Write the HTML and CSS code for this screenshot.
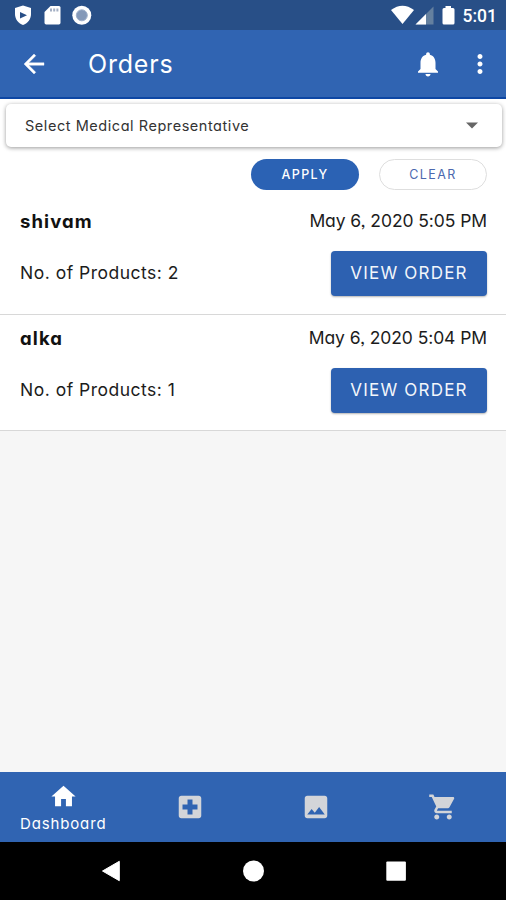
FILE: index.html
```html
<!DOCTYPE html>
<html lang="en">
<head>
<meta charset="utf-8">
<title>Orders</title>
<link rel="stylesheet" href="styles.css">
</head>
<body>
<div class="screen">
  <div class="status">
    <svg class="status-left" width="84" height="30" viewBox="0 0 84 30">
      <path fill="#fff" d="M9 5.500 L17 8 V14 C17 19 14 23 9 25 C4 23 1 19 1 14 V8Z"/>
      <path fill="#284f87" d="M6 12 L13 15.200 L6 18.400Z"/>
      <path fill="#fff" d="M36.500 6 H45 Q46.500 6 46.500 7.500 V22.800 Q46.500 24.500 44.800 24.500 H32.200 Q30.500 24.500 30.500 22.800 V12Z"/>
      <path fill="#a3afc4" d="M36 8.500h2v3h-2zM39.200 8.500h2v3h-2zM42.400 8.500h2v3h-2z"/>
      <circle cx="67.800" cy="15.300" r="9.500" fill="#fff"/>
      <circle cx="67.800" cy="15.300" r="5.500" fill="#8499b9" stroke="#9fb0ca"/>
    </svg>
    <div class="status-right">
      <svg width="65" height="30" viewBox="0 0 65 30">
        <path fill="#fff" d="M0 10 Q11.500 1.500 23 10 L11.500 24Z"/>
        <path fill="#64809f" d="M42.500 6.500V24.500H24.500Z"/>
        <path fill="#fff" d="M35 14V24.500H24.500Z"/>
        <path fill="#fff" d="M54.500 6H60V8H62Q63.500 8 63.500 9.500V23Q63.500 24.500 62 24.500H53Q51.500 24.500 51.500 23V9.500Q51.500 8 53 8H54.500Z"/>
      </svg>
      <span class="clock">5:01</span>
    </div>
  </div>

  <header class="appbar">
    <svg class="back" width="30" height="30" viewBox="0 0 24 24"><path fill="#fff" stroke="#fff" stroke-width=".3" d="M20 11H7.830l5.590-5.590L12 4l-8 8 8 8 1.410-1.410L7.830 13H20v-2z"/></svg>
    <h1 class="title">Orders</h1>
    <svg class="bell" width="30" height="30" viewBox="0 0 24 24"><path fill="#fff" d="M12 22c1.100 0 2-.9 2-2h-4c0 1.100.89 2 2 2zm6-6v-5c0-3.070-1.640-5.640-4.500-6.320V4c0-.83-.67-1.500-1.500-1.500s-1.500.67-1.500 1.500v.68C7.630 5.360 6 7.920 6 11v5l-2 2v1h16v-1l-2-2z"/></svg>
    <svg class="more" width="30" height="30" viewBox="0 0 24 24"><path fill="#fff" d="M12 8c1.100 0 2-.9 2-2s-.9-2-2-2-2 .9-2 2 .9 2 2 2zm0 2c-1.100 0-2 .9-2 2s.9 2 2 2 2-.9 2-2-.9-2-2-2zm0 6c-1.100 0-2 .9-2 2s.9 2 2 2 2-.9 2-2-.9-2-2-2z"/></svg>
  </header>

  <section class="filters">
    <div class="select">
      <span class="select-label">Select Medical Representative</span>
      <svg width="12" height="7" viewBox="0 0 12 7"><path fill="#666" d="M0 .5H12L6 6.500Z"/></svg>
    </div>
    <div class="filter-actions">
      <button class="pill pill-apply"><span>APPLY</span></button>
      <button class="pill pill-clear"><span>CLEAR</span></button>
    </div>
  </section>

  <main class="orders">
    <article class="order order-first">
      <div class="line"><b class="name">shivam</b><span class="date">May 6, 2020 5:05 PM</span></div>
      <div class="line line-action"><span class="count">No. of Products: 2</span><button class="view"><span>VIEW ORDER</span></button></div>
    </article>
    <article class="order">
      <div class="line"><b class="name">alka</b><span class="date">May 6, 2020 5:04 PM</span></div>
      <div class="line line-action"><span class="count">No. of Products: 1</span><button class="view"><span>VIEW ORDER</span></button></div>
    </article>
  </main>

  <nav class="tabs">
    <div class="tab tab-active">
      <svg width="29" height="29" viewBox="0 0 24 24"><path fill="#fff" d="M10 20v-6h4v6h5v-8h3L12 3 2 12h3v8z"/></svg>
      <span class="tab-label">Dashboard</span>
    </div>
    <div class="tab"><svg width="30" height="30" viewBox="0 0 24 24"><path fill="#d3d5d9" d="M19 3H5c-1.100 0-2 .9-2 2v14c0 1.100.9 2 2 2h14c1.100 0 2-.9 2-2V5c0-1.100-.9-2-2-2zm-1 11h-4v4h-4v-4H6v-4h4V6h4v4h4v4z"/></svg></div>
    <div class="tab"><svg width="30" height="30" viewBox="0 0 24 24"><path fill="#d3d5d9" d="M21 19V5c0-1.100-.9-2-2-2H5c-1.100 0-2 .9-2 2v14c0 1.100.9 2 2 2h14c1.100 0 2-.9 2-2zM8.500 13.500l2.500 3.010L14.500 12l4.500 6H5l3.500-4.500z"/></svg></div>
    <div class="tab"><svg width="30" height="30" viewBox="0 0 24 24"><path fill="#d3d5d9" d="M7 18c-1.100 0-1.990.9-1.990 2S5.900 22 7 22s2-.9 2-2-.9-2-2-2zM1 2v2h2l3.600 7.590-1.350 2.450c-.16.280-.25.610-.25.960 0 1.100.9 2 2 2h12v-2H7.420c-.14 0-.25-.11-.25-.25l.03-.12.900-1.630h7.450c.75 0 1.410-.41 1.750-1.030l3.580-6.490c.08-.14.120-.31.120-.48 0-.55-.45-1-1-1H5.210l-.94-2H1zm16 16c-1.100 0-1.990.9-1.990 2s.89 2 1.990 2 2-.9 2-2-.9-2-2-2z"/></svg></div>
  </nav>

  <div class="sysnav">
    <svg width="22" height="22" viewBox="0 0 22 22"><path fill="#fff" stroke="#fff" stroke-linejoin="round" d="M18.300 1.300V20.700L1.500 11Z"/></svg>
    <svg width="22" height="22" viewBox="0 0 22 22"><circle cx="10.500" cy="11" r="10.500" fill="#fff"/></svg>
    <svg width="22" height="22" viewBox="0 0 22 22"><rect x="1.300" y="1.600" width="19.600" height="19.200" rx="1" fill="#fff"/></svg>
  </div>
</div>
</body>
</html>
```
FILE: styles.css
```css
* { box-sizing: border-box; }
body {
  margin: 0;
  font-family: Inter, "Open Sans", sans-serif;
  font-feature-settings: "cv11", "ss03";
  color: #1c1c1c;
}
.screen {
  width: 506px;
  height: 900px;
  display: flex;
  flex-direction: column;
  background: #f6f6f6;
  overflow: hidden;
}
button { font: inherit; font-feature-settings: inherit; padding: 0; border: 0; }

.status {
  height: 30px;
  flex: none;
  display: flex;
  justify-content: space-between;
  background: #284f87;
  padding: 0 9px 0 14px;
}
.status-right { display: flex; align-items: center; gap: 7px; }
.clock {
  font: 500 17.5px/30px Roboto, sans-serif;
  color: #fff;
  padding-top: 2px;
}

.appbar {
  height: 69px;
  flex: none;
  display: flex;
  align-items: center;
  background: #3064b2;
  border-bottom: 2px solid #0d47a4;
  padding: 0 11px 0 19px;
}
.title {
  flex: 1;
  margin: 0 0 0 39px;
  font-size: 25px;
  font-weight: 400;
  line-height: 30px;
  letter-spacing: .8px;
  color: #fff;
}
.bell { margin-right: 22px; }

.filters {
  flex: none;
  height: 98px;
  background: #fff;
  padding: 5px 4px 0 6px;
}
.select {
  height: 43px;
  display: flex;
  align-items: center;
  justify-content: space-between;
  padding: 0 24px 0 19px;
  border-radius: 5px;
  background: #fff;
  box-shadow: 0 1px 4px rgba(0, 0, 0, .4);
}
.select-label { font-size: 14.5px; letter-spacing: .55px; color: #333; }
.filter-actions {
  display: flex;
  justify-content: flex-end;
  gap: 20px;
  padding: 12px 15px 0 0;
}
.pill {
  width: 108px;
  height: 31px;
  border-radius: 16px;
  font-size: 12.5px;
  letter-spacing: 1.4px;
}
.pill-apply { background: #2b62b4; color: #fff; font-weight: 500; }
.pill-clear { background: #fff; color: #4c68ae; border: 1px solid #dedede; }

.orders { flex: 1; }
.order {
  height: 116px;
  background: #fff;
  border-bottom: 1px solid #d8d8d8;
  padding: 10px 19px 0 20px;
}
.order-first { height: 118px; padding-top: 11px; }
.line {
  display: flex;
  justify-content: space-between;
  align-items: center;
  height: 25px;
  font-size: 17.5px;
}
.line-action { height: 45px; margin-top: 18px; }
.name { font-size: 18.5px; font-weight: 700; color: #111; padding-top: 1px; letter-spacing: 1.1px; }
.date { letter-spacing: -.08px; }
.count { letter-spacing: .5px; padding-bottom: 2px; }
.view {
  width: 156px;
  height: 45px;
  border-radius: 4px;
  background: #2d61b1;
  color: #f3f6fb;
  font-size: 17px;
  letter-spacing: 1.2px;
  padding-bottom: 1px;
  box-shadow: 0 1px 2px rgba(0, 0, 0, .3);
}

.tabs {
  flex: none;
  height: 70px;
  display: grid;
  grid-template-columns: repeat(4, 1fr);
  background: #3064b2;
}
.tab { display: flex; flex-direction: column; align-items: center; justify-content: center; }
.tab-active { padding-top: 2px; }
.tab-label { font-size: 15px; line-height: 20px; letter-spacing: .85px; color: #fff; margin-top: 3px; }

.sysnav {
  flex: none;
  height: 58px;
  display: flex;
  justify-content: space-between;
  align-items: center;
  background: #000;
  padding: 0 99px 0 101px;
}
```
